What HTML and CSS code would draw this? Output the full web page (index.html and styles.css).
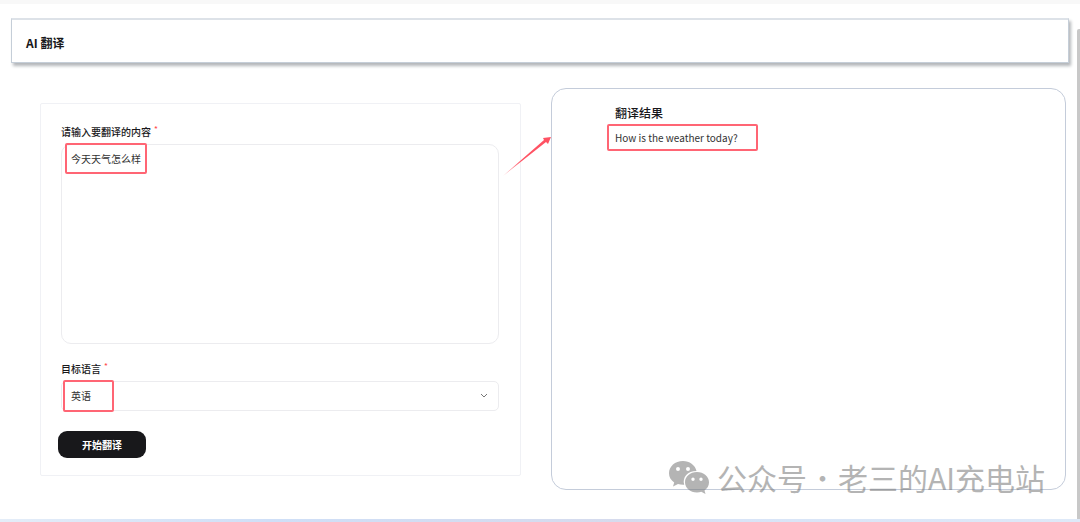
FILE: index.html
```html
<!DOCTYPE html>
<html lang="zh-CN">
<head>
<meta charset="utf-8">
<title>AI 翻译</title>
<link rel="stylesheet" href="styles.css">
</head>
<body>
<div class="page">
  <header class="header"><h1 class="header-title">AI 翻译</h1></header>
  <main class="columns">
    <form class="form-card">
      <div class="field">
        <label class="label" for="source">请输入要翻译的内容<span class="required">*</span></label>
        <div class="control">
          <textarea class="source" id="source">今天天气怎么样</textarea>
          <span class="mark mark-source"></span>
        </div>
      </div>
      <div class="field">
        <label class="label" for="language">目标语言<span class="required">*</span></label>
        <div class="control">
          <select class="language" id="language"><option>英语</option></select>
          <svg class="chevron" viewBox="0 0 8 5" aria-hidden="true"><path d="M1 1 L4 4 L7 1"/></svg>
          <span class="mark mark-language"></span>
        </div>
      </div>
      <button class="submit" type="button">开始翻译</button>
    </form>
    <section class="result-card">
      <svg class="arrow" viewBox="0 0 50 42" aria-hidden="true">
        <defs><linearGradient id="fade" x1="0" y1="1" x2="1" y2="0"><stop offset="0" stop-color="#ff5263" stop-opacity=".35"/><stop offset=".4" stop-color="#ff5263"/></linearGradient></defs>
        <path fill="url(#fade)" d="M1 40 L42 4 L41 2 L49 1 L46 8 L44 6 Z"/>
      </svg>
      <h2 class="result-title">翻译结果</h2>
      <p class="result-text">How is the weather today?<span class="mark mark-result"></span></p>
    </section>
  </main>
  <div class="scrollbar"></div>
  <div class="watermark">
    <svg class="wechat" viewBox="0 0 42 34" aria-hidden="true">
      <path fill-rule="evenodd" d="M15 1C7 1 1 6.500 1 13.200c0 3.800 1.900 7 5.200 9.200L5 26.500l5-2.500c1.800.6 3.800.9 6.200.8C14 17 20 10.800 28.500 10.900 27 5 21.500 1 15 1ZM10 7a2 2 0 1 1 0 4 2 2 0 0 1 0-4ZM20 7a2 2 0 1 1 0 4 2 2 0 0 1 0-4Z"/>
      <path fill-rule="evenodd" d="M29 12c-6.800 0-12 4.500-12 10.200s5.200 10.200 12 10.200c1.600 0 3-.2 4.300-.6L37.500 34l-1-3.600c2.800-1.900 4.500-4.800 4.500-8.200C41 16.500 35.600 12 29 12ZM25 17.500a1.700 1.700 0 1 1 0 3.400 1.700 1.700 0 0 1 0-3.400ZM33 17.500a1.700 1.700 0 1 1 0 3.400 1.700 1.700 0 0 1 0-3.400Z"/>
    </svg>
    <span class="account">公众号</span><span class="dot">·</span><span>老三的AI充电站</span>
  </div>
  <footer class="footer"></footer>
</div>
</body>
</html>
```
FILE: styles.css
```css
* { box-sizing: border-box; }
body {
  margin: 0;
  background: #fff;
  color: #18181b;
  font: 10px/16px "Noto Sans CJK SC", sans-serif;
}
.page {
  position: relative;
  display: flex;
  flex-direction: column;
  min-height: 100vh;
  border-top: 4px solid #f8f8f8;
}
.header {
  margin: 14px 11px 0;
  padding: 16px 14px 12px;
  border: 1px solid #c5ced8;
  border-top: 2px solid #dde2e8;
  box-shadow: 2px 3px 3px #b4b7ba;
}
.header-title { margin: 0; font-size: 12px; line-height: 14px; font-weight: 700; }
.columns {
  flex: 1;
  display: grid;
  grid-template-columns: 481fr 515fr;
  gap: 30px;
  margin: 25px 14px 29px 40px;
}
.form-card {
  margin: 15px 0 14px;
  padding: 20px 17px 16px;
  border: 1px solid #f0f1f5;
  border-radius: 2px;
}
.field { padding: 0 4px 0 3px; margin-bottom: 17px; }
.label { display: block; height: 20px; font-weight: 500; }
.required { margin-left: 3px; color: #ff4d4f; font-size: 8px; vertical-align: 4px; line-height: 8px; }
.control { position: relative; display: flex; }
.source, .language {
  width: 100%;
  margin: 0;
  border: 1px solid #ececef;
  background: transparent;
  color: #333;
  font: inherit;
  outline: none;
}
.source { height: 200px; padding: 6px 9px; border-radius: 10px; resize: none; }
.language { height: 30px; padding: 0 9px; border-radius: 5px; appearance: none; }
.chevron { position: absolute; right: 11px; top: 12px; width: 8px; height: 5px; fill: none; stroke: #777; stroke-width: 1; }
.mark { position: absolute; border: 2px solid #ff6574; border-radius: 2px; pointer-events: none; }
.mark-source { left: 4px; top: -1px; width: 82px; height: 31px; }
.mark-language { left: 2px; top: -1px; width: 51px; height: 32px; }
.mark-result { left: -8px; top: -5px; width: 151px; height: 27px; }
.submit {
  display: block;
  width: 88px;
  height: 27px;
  margin-top: 20px;
  padding: 0;
  border: 0;
  border-radius: 9px;
  background: #18181b;
  color: #fff;
  font: inherit;
  font-weight: 700;
}
.result-card {
  position: relative;
  padding: 16px 63px;
  border: 1px solid #c4ccda;
  border-radius: 15px;
}
.result-title { margin: 0; font-size: 12px; line-height: 16px; font-weight: 500; }
.result-text { position: relative; margin: 8px 0 0; color: #333; font-size: 10px; line-height: 18px; }
.arrow { position: absolute; left: -50px; top: 47px; width: 50px; height: 42px; }
.scrollbar { position: absolute; right: 0; top: 25px; bottom: 3px; width: 3px; background: #c8c8c8; border-radius: 2px 0 0 0; }
.watermark {
  position: absolute;
  right: 35px;
  bottom: 25px;
  display: flex;
  align-items: center;
  color: #777;
  opacity: .55;
  font-size: 30px;
  line-height: 40px;
  font-weight: 400;
}
.wechat { width: 42px; height: 34px; margin-right: 7px; fill: #777; }
.dot { width: 31px; text-align: center; font-weight: 300; }
.footer { height: 3px; background: linear-gradient(90deg, #e4edf8, #cfdff7 25%, #d6dbed 58%, #d8e4f7 68%, #dee9f8); }
```
